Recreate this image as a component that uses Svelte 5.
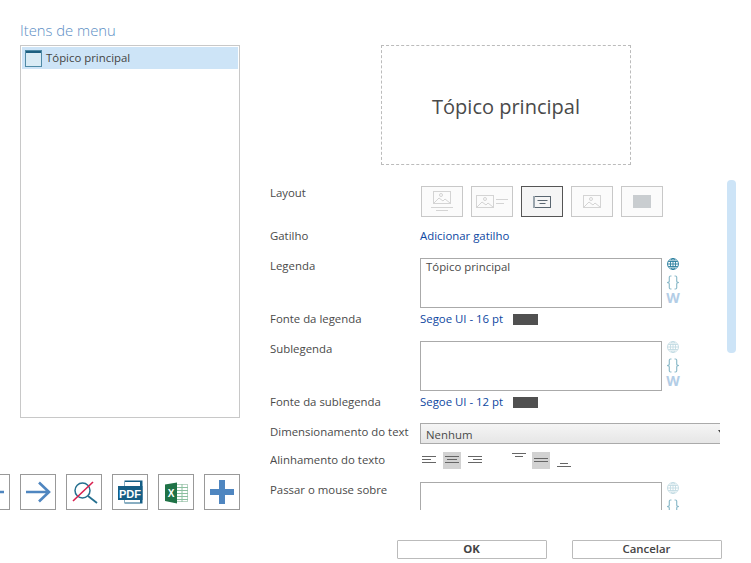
<script>
</script>

{#snippet side(dim)}
  <div class="side">
    <svg width="14" height="14" viewBox="0 0 14 14" fill="none" stroke={dim ? '#c3dbe3' : '#2a7f9e'} stroke-width="0.900"><circle cx="7" cy="7" r="5.500"/><ellipse cx="7" cy="7" rx="2.600" ry="5.500"/><path d="M1.500 7h11M2.200 4.500h9.600M2.200 9.500h9.600M7 1.500v11"/></svg>
    <svg width="14" height="17" viewBox="0 0 14 17" fill="none" stroke="#8fbccb" stroke-width="1.200"><path d="M5.500 2H4.500Q3.300 2 3.300 3.200V7Q3.300 8.500 1 8.500Q3.300 8.500 3.300 10V13.800Q3.300 15 4.500 15H5.500M8.500 2H9.500Q10.700 2 10.700 3.200V7Q10.700 8.500 13 8.500Q10.700 8.500 10.700 10V13.800Q10.700 15 9.500 15H8.500"/></svg>
    <span class="w">W</span>
  </div>
{/snippet}

{#snippet fontRow(label, value)}
  <div class="row font">
    <span class="label">{label}</span>
    <div class="val"><span class="link">{value}</span><span class="swatch"></span></div>
  </div>
{/snippet}

{#snippet textRow(label, text, dim, cls)}
  <div class="row area {cls}">
    <span class="label">{label}</span>
    <div class="val areaval">
      <div class="ta">{text}</div>
      {@render side(dim)}
    </div>
  </div>
{/snippet}

<div class="dialog">
  <div class="main">
    <section class="left">
      <h2>Itens de menu</h2>
      <div class="list">
        <div class="item">
          <svg width="17" height="17" viewBox="0 0 17 17"><rect x="0.500" y="0.500" width="16" height="16" fill="#d9ebf5" stroke="#4f8aa6"/><rect x="1" y="1" width="15" height="2" fill="#1d5f80"/></svg>
          <span>Tópico principal</span>
        </div>
      </div>
      <div class="tools">
        <button class="tool" aria-label="Voltar"><svg width="34" height="34" viewBox="0 0 34 34" fill="none" stroke="#4f86c0" stroke-width="2.600"><path d="M6 17h23M16 7.500L6 17l10 9.500"/></svg></button>
        <button class="tool" aria-label="Avançar"><svg width="34" height="34" viewBox="0 0 34 34" fill="none" stroke="#4f86c0" stroke-width="2.600"><path d="M5 17h23M18 7.500l10 9.500-10 9.500"/></svg></button>
        <button class="tool" aria-label="Pré-visualizar"><svg width="34" height="34" viewBox="0 0 34 34" fill="none"><circle cx="15.500" cy="15.500" r="7.500" stroke="#256f8f" stroke-width="1.500"/><path d="M21 21l9 7" stroke="#256f8f" stroke-width="1.800"/><path d="M6 26L26 7" stroke="#d8204f" stroke-width="1.600"/></svg></button>
        <button class="tool" aria-label="PDF"><svg width="34" height="34" viewBox="0 0 34 34"><path d="M11.500 5.500H29.500V28.500H11.500V25H27V11H11.500Z" fill="#155e85"/><rect x="12" y="7" width="15" height="4" fill="#fff"/><rect x="12" y="25" width="15" height="2.500" fill="#fff"/><rect x="5" y="11" width="24.500" height="14" fill="#155e85"/><text x="17" y="22.800" text-anchor="middle" class="pdf">PDF</text></svg></button>
        <button class="tool" aria-label="Excel"><svg width="34" height="34" viewBox="0 0 34 34"><rect x="17.500" y="9.500" width="11" height="17" fill="#fff" stroke="#b9d4c4"/><path d="M23 9v18M18 12.500h11M18 15.500h11M18 18.500h11M18 21.500h11M18 24.500h11" stroke="#8cc0a0"/><path d="M6 9.500L18 7.500V28.500L6 26Z" fill="#1f7246"/><text x="12" y="22" text-anchor="middle" class="xl">X</text></svg></button>
        <button class="tool" aria-label="Adicionar"><svg width="34" height="34" viewBox="0 0 34 34" fill="#4f86c0"><rect x="14" y="5" width="6" height="24"/><rect x="5" y="14" width="24" height="6"/></svg></button>
      </div>
    </section>

    <section class="right">
      <div class="preview"><span>Tópico principal</span></div>

      <div class="row layout">
        <span class="label">Layout</span>
        <div class="val thumbs">
          <button class="thumb" aria-label="Layout 1"><svg width="24" height="24" viewBox="0 0 24 24" fill="none" stroke="#d4d4d4"><rect x="3.500" y="1.500" width="17" height="12"/><path d="M4 13l5-5 4 3 2-2 5 4"/><circle cx="11" cy="5" r="1.500"/><path d="M1 17.500h22M6 20.500h12"/></svg></button>
          <button class="thumb" aria-label="Layout 2"><svg width="34" height="24" viewBox="0 0 34 24" fill="none" stroke="#d4d4d4"><rect x="1.500" y="5.500" width="17" height="12"/><path d="M2 17l5-5 4 3 2-2 5 4"/><circle cx="10" cy="9" r="1.500"/><path d="M21 9.500h12M21 13.500h8"/></svg></button>
          <button class="thumb active" aria-label="Layout 3"><svg width="20" height="16" viewBox="0 0 20 16" fill="none"><rect x="2.500" y="2.500" width="16" height="11" stroke="#5a6670"/><rect x="1" y="2" width="2" height="12" fill="#9aa5ad"/><path d="M5.500 6.500h10M7.500 9.500h6" stroke="#5a6670"/></svg></button>
          <button class="thumb" aria-label="Layout 4"><svg width="24" height="16" viewBox="0 0 24 16" fill="none" stroke="#d4d4d4"><rect x="3.500" y="1.500" width="17" height="12"/><path d="M4 13l5-5 4 3 2-2 5 4"/><circle cx="11" cy="5" r="1.500"/></svg></button>
          <button class="thumb" aria-label="Layout 5"><span class="fill"></span></button>
        </div>
      </div>

      <div class="row gatilho">
        <span class="label">Gatilho</span>
        <div class="val"><span class="link">Adicionar gatilho</span></div>
      </div>

      {@render textRow('Legenda', 'Tópico principal', false, 'first')}
      {@render fontRow('Fonte da legenda', 'Segoe UI - 16 pt')}
      {@render textRow('Sublegenda', '', true, 'sub')}
      {@render fontRow('Fonte da sublegenda', 'Segoe UI - 12 pt')}

      <div class="row dim">
        <span class="label">Dimensionamento do text</span>
        <div class="val"><div class="select"><span>Nenhum</span><i></i></div></div>
      </div>

      <div class="row align">
        <span class="label">Alinhamento do texto</span>
        <div class="val aligns">
          <span class="ai"><svg width="14" height="10" viewBox="0 0 14 10" stroke="#666"><path d="M0 1.500h14M0 4.500h9M0 7.500h14"/></svg></span>
          <span class="ai on"><svg width="14" height="10" viewBox="0 0 14 10" stroke="#666"><path d="M0 1.500h14M2 4.500h10M0 7.500h14"/></svg></span>
          <span class="ai"><svg width="14" height="10" viewBox="0 0 14 10" stroke="#666"><path d="M0 1.500h14M5 4.500h9M0 7.500h14"/></svg></span>
          <span class="gap"></span>
          <span class="ai v"><svg width="14" height="14" viewBox="0 0 14 14" stroke="#666"><path d="M0 0.500h14M3 3.500h8"/></svg></span>
          <span class="ai on"><svg width="14" height="14" viewBox="0 0 14 14" stroke="#666"><path d="M0 5.500h14M0 8.500h14"/></svg></span>
          <span class="ai"><svg width="14" height="14" viewBox="0 0 14 14" stroke="#666"><path d="M3 10.500h8M0 13.500h14"/></svg></span>
        </div>
      </div>

      {@render textRow('Passar o mouse sobre', '', true, 'hover')}
    </section>
    <div class="scroll"></div>
  </div>

  <footer>
    <button class="btn ok">OK</button>
    <button class="btn">Cancelar</button>
  </footer>
</div>

<style>
  :global(body) { margin: 0; background: #fff; }
  .dialog {
    width: 751px; height: 563px; overflow: hidden; position: relative;
    font-family: "Open Sans", "Noto Sans", sans-serif; font-size: 11.400px; color: #4a4a4a;
    background: #fff;
  }
  .main { display: flex; height: 510px; }
  .left { width: 220px; margin-left: 20px; flex: none; display: flex; flex-direction: column; }
  h2 { margin: 20px 0 0; font-size: 14.800px; line-height: 20px; height: 25px; font-weight: 300; color: #5b8ec4; font-family: "Open Sans", sans-serif; }
  .list { width: 220px; height: 373px; box-sizing: border-box; border: 1px solid #c8c8c8; padding: 1px; }
  .item { display: flex; align-items: center; gap: 4px; height: 22px; padding-left: 3px; background: #cde4f7; color: #444; }
  .item span { margin-top: -2px; }
  .tools { display: flex; justify-content: flex-end; gap: 10px; margin-top: 56px; }
  .tool { flex: none; width: 36px; height: 36px; padding: 0; border: 1px solid #999; background: #fff; display: flex; align-items: center; justify-content: center; }
  .right { width: 450px; margin-left: 30px; height: 510px; overflow: hidden; flex: none; }
  .preview {
    margin: 45px 0 0 111px; width: 250px; height: 120px; box-sizing: border-box; border: 1px dashed #bbb; padding-top: 2px;
    display: flex; align-items: center; justify-content: center; font-size: 20px; color: #4a4a4a;
  }
  .row { display: flex; }
  .label { width: 150px; flex: none; white-space: nowrap; line-height: 16px; }
  .val { flex: 1; min-width: 0; }
  .link { color: #0d47a1; }
  .layout { margin-top: 21px; height: 31px; }
  .layout .label { margin-top: -1px; }
  .thumbs { display: flex; gap: 8px; padding-left: 1px; }
  .thumb { width: 42px; height: 31px; padding: 0; box-sizing: border-box; border: 1px solid #c8c8c8; background: #fbfbfb; display: flex; align-items: center; justify-content: center; }
  .thumb.active { border-color: #555; background: #f5f5f5; }
  .fill { width: 18px; height: 13px; background: #c9cdd0; }
  .gatilho { margin-top: 11px; height: 16px; line-height: 16px; }
  .area { margin-top: 14px; height: 50px; }
  .areaval { display: flex; gap: 4px; }
  .ta { width: 242px; height: 50px; box-sizing: border-box; border: 1px solid #aaa; padding: 0 5px; line-height: 16px; }
  .side { display: flex; flex-direction: column; align-items: center; width: 14px; height: 50px; }
  .side svg:first-child { margin-top: -1px; }
  .side svg:nth-child(2) { margin-top: 3px; }
  .w { font: bold 14px/16px "Open Sans", sans-serif; color: #b3cde6; margin-top: -1px; }
  .font { margin-top: 3px; height: 16px; line-height: 16px; }
  .font .val { display: flex; align-items: center; gap: 10px; }
  .swatch { width: 25px; height: 11px; background: #505050; }
  .dim { margin-top: 13px; height: 22px; overflow: hidden; }
  .dim .label { line-height: 18px; }
  .select { width: 305px; height: 21px; box-sizing: border-box; border: 1px solid #aaa; background: linear-gradient(#f5f5f5, #e6e6e6); padding-left: 5px; line-height: 21px; display: flex; justify-content: space-between; }
  .select i { width: 0; height: 0; margin: 6px -1px 0 0; border: 3px solid transparent; border-top: 4px solid #444; transform: translateX(-1px); }
  .align { margin-top: 6px; height: 18px; align-items: center; }
  .aligns { display: flex; }
  .ai { width: 18px; height: 17px; margin-right: 5px; display: flex; align-items: center; justify-content: center; }
  .ai.on { background: #d2d2d2; }
  .ai.v { margin-right: 4px; }
  .gap { width: 21px; }
  .hover { margin-top: 13px; }
  .scroll { position: absolute; left: 727px; top: 180px; width: 9px; height: 173px; border-radius: 4px; background: #cde4f7; }
  footer { display: flex; gap: 25px; padding: 30px 0 0 397px; }
  .btn { width: 150px; height: 19px; padding: 0 1px 1px 0; box-sizing: border-box; border: 1px solid #bbb; border-radius: 1px; background: #fff; font: 600 11.400px/16px "Open Sans", sans-serif; color: #444; }
  .btn.ok { font-weight: 700; }
  .pdf { font: bold 11px "Liberation Sans", sans-serif; fill: #fff; }
  .xl { font: bold 10px "Liberation Sans", sans-serif; fill: #fff; }
</style>
